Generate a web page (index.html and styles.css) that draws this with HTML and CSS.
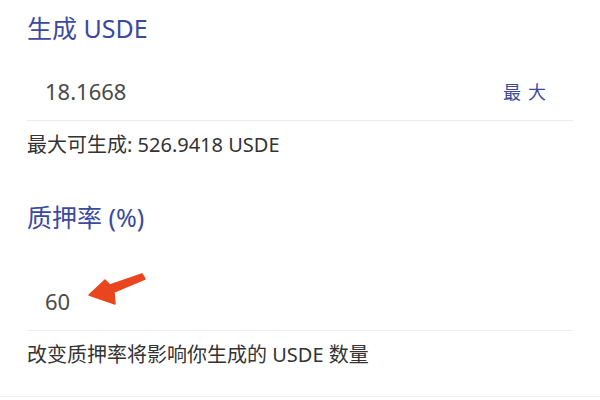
FILE: index.html
```html
<!DOCTYPE html>
<html lang="zh-CN">
<head>
<meta charset="utf-8">
<title>生成 USDE</title>
<link rel="stylesheet" href="styles.css">
</head>
<body>
<main class="form">
  <section class="field">
    <h2 class="label">生成 USDE</h2>
    <div class="input-row">
      <span class="value">18.1668</span>
      <span class="max">最大</span>
    </div>
    <p class="hint">最大可生成: 526.9418 USDE</p>
  </section>
  <section class="field field-ratio">
    <h2 class="label">质押率 (%)</h2>
    <div class="input-row input-ratio">
      <span class="value">60</span>
      <svg class="arrow" width="60" height="40" viewBox="0 0 60 40" aria-hidden="true">
        <polygon points="1,23 17,8 22,13 54,2 57,7 26,20 27,32" fill="#e9461f" stroke="#e9461f" stroke-width="1.5" stroke-linejoin="round"/>
      </svg>
    </div>
    <p class="hint">改变质押率将影响你生成的 USDE 数量</p>
  </section>
  <div class="bottom-line"></div>
</main>
</body>
</html>
```
FILE: styles.css
```css
html, body {
  margin: 0;
  padding: 0;
  background: #ffffff;
}
body {
  width: 600px;
  height: 400px;
  overflow: hidden;
  font-family: "Noto Sans", "Noto Sans CJK SC", sans-serif;
}
.form {
  padding: 12px 27px 0 27px;
}
.field {
  display: flex;
  flex-direction: column;
}
.label {
  margin: 0;
  font-size: 25px;
  line-height: 32px;
  font-weight: 400;
  color: #3b4a9f;
}
.input-row {
  position: relative;
  display: flex;
  align-items: center;
  justify-content: space-between;
  height: 58px;
  margin-top: 18px;
  padding: 0 27px 0 18px;
  border-bottom: 1px solid #ececec;
}
.input-ratio {
  margin-top: 39px;
}
.value {
  font-size: 22px;
  color: #4a4a4a;
}
.max {
  font-size: 18px;
  letter-spacing: 7px;
  margin-right: -7px;
  color: #3b4a9f;
}
.hint {
  margin: 11px 0 0 0;
  font-size: 20px;
  line-height: 26px;
  color: #333333;
}
.field-ratio {
  margin-top: 43px;
}
.arrow {
  position: absolute;
  left: 61px;
  top: 0;
}
.bottom-line {
  margin: 28px -27px 0 -27px;
  border-top: 1px solid #f2f2f2;
}
```
